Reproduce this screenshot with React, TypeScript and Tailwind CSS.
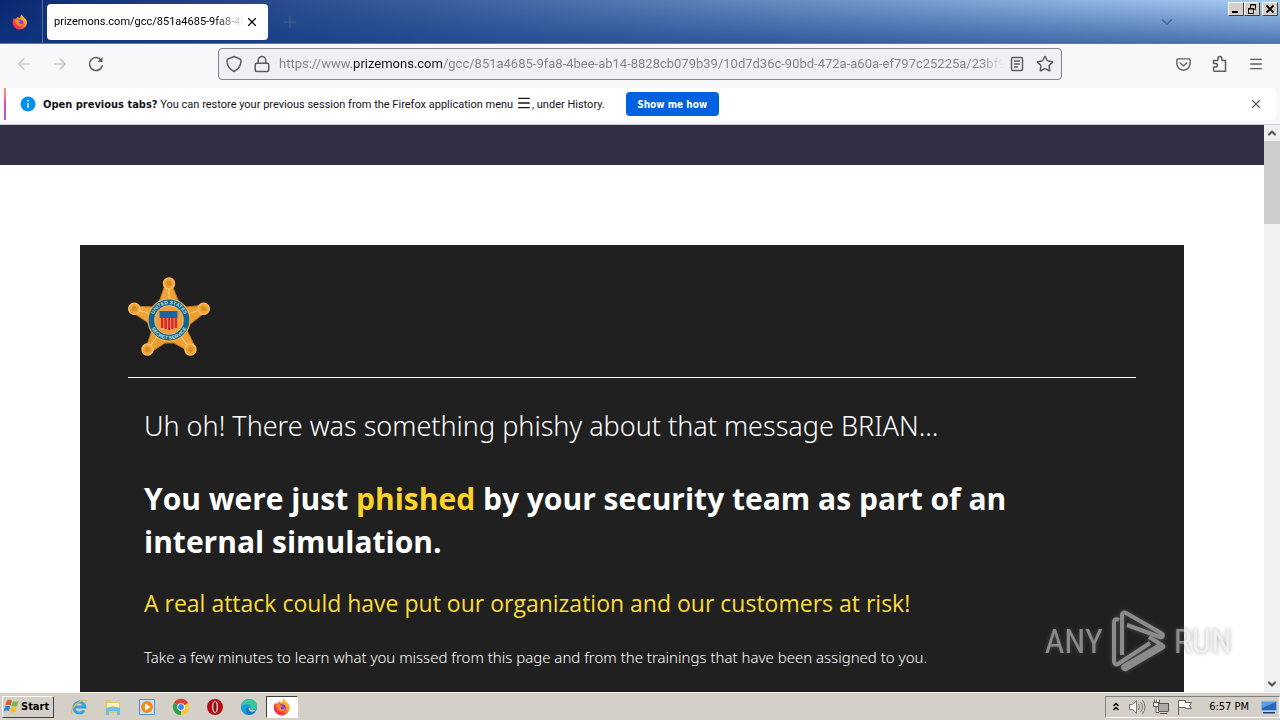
import type {ReactNode} from "react";
import {ArrowLeft, ArrowRight, ChevronDown, ChevronUp, Lock, Menu, Plus, Star, X} from "lucide-react";

function Firefox({className}: { className?: string }) {
    return (
        <svg viewBox="0 0 18 18" className={className} aria-hidden="true">
            <defs>
                <linearGradient id="fox" x1="1" y1="0" x2="0" y2="1">
                    <stop offset="0" stopColor="#fff04a"/>
                    <stop offset=".35" stopColor="#ffa028"/>
                    <stop offset=".7" stopColor="#ff3a45"/>
                    <stop offset="1" stopColor="#e2196b"/>
                </linearGradient>
            </defs>
            <path fill="url(#fox)" d="M2.2 4.500 3 6l2-1.200c.5-1 1.300-1.500 2-1.800 0 .6.300 1.200.8 1.500h1.400c.2-1.800.8-3.200 1.800-4.200.3 1.500 1.500 2.500 2.500 3.700C16 6 17.200 8 16.800 10.500 16 14.500 13 17.500 9 17.500S1 14.200.8 10c-.1-2 .4-4 1.400-5.500Z"/>
            <circle cx="9" cy="10" r="3.800" fill="#8b3fe0"/>
            <path fill="#ff8a22" d="M3.500 6.500c2-.8 3.200.3 4 .9l2.300.3c-.4 1-1.600 1.200-2.200 1.700-.2 1.600 1.500 2.400 3.200 1.600 1-.4 1.700.2 1.200.9-1.500 2.100-4.500 2.200-6.300.4C4 10.800 3.300 8.500 3.500 6.500Z"/>
        </svg>
    );
}

function Badge() {
    const spokes = [0, 72, 144, 216, 288];
    return (
        <svg viewBox="0 0 82 80" className="w-[82px] h-20" role="img" aria-label="United States Secret Service">
            <defs>
                <linearGradient id="gold" x1="0" y1="0" x2="1" y2="1">
                    <stop offset="0" stopColor="#f7b54a"/>
                    <stop offset=".5" stopColor="#e89a2c"/>
                    <stop offset="1" stopColor="#f4a63a"/>
                </linearGradient>
                <path id="ringTop" d="M25 43a16 16 0 0 1 32 0"/>
                <path id="ringBottom" d="M21.500 43a19.500 19.500 0 0 0 39 0"/>
            </defs>
            <path fill="url(#gold)" stroke="#c87514" strokeWidth="1" d="M37 8h7l8 20 6 2 20-2 1 6-18 14-2 5 8 17-5 5-16-9h-9L23 75l-5-4 6-18-2-6L4 35l1-6 20 1 5-2Z"/>
            {spokes.map((a) => (
                <g key={a} transform={`rotate(${a} 41 43)`}>
                    <path d="M41 10v14M41 24l-5 3M41 24l5 3" stroke="#ffd27a" strokeWidth="1" fill="none"/>
                    <circle cx="41" cy="6.500" r="5.500" fill="#eda235" stroke="#f9bd5c" strokeWidth="1.500"/>
                    <circle cx="41" cy="6.500" r="2.500" fill="#d98a21"/>
                </g>
            ))}
            <circle cx="41" cy="43" r="21" fill="#14648f" stroke="#f3b04a" strokeWidth="1.200"/>
            <circle cx="41" cy="43" r="14.500" fill="#efa03a" stroke="#d7dcc5" strokeWidth=".6"/>
            <g fill="#c6dfd2" fontFamily="Liberation Sans, sans-serif" fontSize="5" fontWeight="700" textAnchor="middle">
                <text><textPath href="#ringTop" startOffset="50%">UNITED STATES</textPath></text>
                <text><textPath href="#ringBottom" startOffset="50%">SECRET SERVICE</textPath></text>
            </g>
            <path fill="#f0b27a" d="M33 41h16v10l-8 2-8-1Z"/>
            <path fill="#1767a5" d="M31.500 34h18v7h-18Z"/>
            <path stroke="#d92a22" strokeWidth="2.600" d="M34.200 41v10M37.600 41v11M41 41v12M44.400 41v11M47.800 41v10"/>
        </svg>
    );
}

function TitleBar() {
    const caption = "w-4 h-[14px] flex items-center justify-center bg-[#d4d0c8] border border-t-white border-l-white border-r-[#404040] border-b-[#404040]";
    return (
        <header className="relative h-11 flex items-center bg-linear-to-r from-[#0b2871] to-[#a9cff5] border-b border-[#6b7690]">
            <div className="absolute inset-0 bg-linear-to-b from-transparent to-[#0e3a86]/60"/>
            <div className="relative w-[43px] h-full flex items-center justify-center border-r border-[#53689d] pr-0.5">
                <Firefox className="size-4"/>
            </div>
            <div className="relative ml-1 h-9 w-[221px] flex items-center rounded bg-white pl-[7px] pr-2">
                <span className="flex-1 overflow-hidden whitespace-nowrap pt-0.5 text-[11px] mask-r-from-85% font-['Roboto',sans-serif]">prizemons.com/gcc/851a4685-9fa8-4bee</span>
                <button aria-label="Close tab" className="shrink-0"><X className="size-4 p-px" strokeWidth={2}/></button>
            </div>
            <button aria-label="New tab" className="relative ml-3 text-[#566a7e]"><Plus className="size-5" strokeWidth={1}/></button>
            <button aria-label="List all tabs" className="relative ml-auto mr-[52px] text-[#45699c]"><ChevronDown className="size-[18px]"/></button>
            <div className="relative self-start flex mt-0.5 mr-0.5">
                <button aria-label="Minimize" className={caption}>
                    <svg viewBox="0 0 12 10" className="w-3 h-[10px]"><path d="M2 7h6v2H2z"/></svg>
                </button>
                <button aria-label="Restore" className={caption}>
                    <svg viewBox="0 0 12 10" className="w-3 h-[10px]" fill="none" stroke="#000"><path d="M4.500 4V.5h5v5H8M4 1h6M2.500 4.500h5v5h-5zM2 5h6"/></svg>
                </button>
                <button aria-label="Close" className={caption + " ml-0.5"}>
                    <svg viewBox="0 0 12 10" className="w-3 h-[10px]" stroke="#000" strokeWidth="1.800"><path d="m2.500 1.500 7 7m0-7-7 7"/></svg>
                </button>
            </div>
        </header>
    );
}

function Toolbar() {
    return (
        <nav className="h-11 flex items-center bg-[#f8f8fb] pb-1 text-[#5b5b66]">
            <div className="w-[218px] shrink-0 flex items-center gap-[18px] pl-[15px]">
                <button aria-label="Back" className="text-[#bdbdc4]"><ArrowLeft className="size-[18px]" strokeWidth={1.5}/></button>
                <button aria-label="Forward" className="text-[#bdbdc4]"><ArrowRight className="size-[18px]" strokeWidth={1.5}/></button>
                <button aria-label="Reload">
                    <svg viewBox="0 0 18 18" className="size-[18px]" fill="none" stroke="currentColor" strokeWidth="1.500">
                        <path d="M14.500 5.500A6.500 6.500 0 1 0 15.500 10"/>
                        <path d="M15.500 2v5h-5Z" fill="currentColor" stroke="none"/>
                    </svg>
                </button>
            </div>
            <div className="w-[844px] min-w-0 h-8 flex items-center rounded border border-[#85858f] bg-[#f0f0f4] px-[7px]">
                <svg viewBox="0 0 16 18" className="w-4 h-[18px] shrink-0" fill="none" stroke="currentColor" strokeWidth="1.500">
                    <path d="M8 1.500 14 4c1 .4 1 1 1 2-.2 5-2 8-7 10.500C3 14 1.200 11 1 6c0-1 0-1.600 1-2Z"/>
                </svg>
                <Lock className="size-[18px] ml-[11px] shrink-0" strokeWidth={2}/>
                <div className="relative flex-1 min-w-0 ml-2 overflow-hidden whitespace-nowrap text-[13px] text-[#85858d] mask-r-from-97% font-['Roboto',sans-serif]">
                    https://www.<span className="text-[#15141a]">prizemons.com</span>/gcc/851a4685-9fa8-4bee-ab14-8828cb079b39/10d7d36c-90bd-472a-a60a-ef797c25225a/23bf96
                </div>
                <button aria-label="Reader view" className="ml-1.5">
                    <svg viewBox="0 0 16 16" className="size-4" fill="none" stroke="currentColor" strokeWidth="1.500">
                        <rect x="2.500" y="1.500" width="11" height="13" rx="1.500"/>
                        <path d="M5 5h6M5 8h6M5 11h4"/>
                    </svg>
                </button>
                <button aria-label="Bookmark" className="ml-[11px]"><Star className="size-[18px]"/></button>
            </div>
            <div className="ml-auto flex items-center gap-[19px] pr-4">
                <button aria-label="Save to Pocket">
                    <svg viewBox="0 0 18 18" className="size-[17px]" fill="none" stroke="currentColor" strokeWidth="1.500" strokeLinecap="round">
                        <path d="M3.500 3h11c1 0 1.500.6 1.500 1.500V8c0 4-3 7-7 7S2 12 2 8V4.500C2 3.600 2.500 3 3.500 3Z"/>
                        <path d="m5.500 7.500 3.500 3 3.500-3"/>
                    </svg>
                </button>
                <button aria-label="Extensions">
                    <svg viewBox="0 0 18 18" className="size-[18px]" fill="none" stroke="currentColor" strokeWidth="1.500">
                        <path d="M2.500 5.500h3.800c.5 0 .7-.3.7-.7V3.300a1.900 1.900 0 0 1 3.800 0v1.500c0 .4.2.7.7.7h3v10.700h-11c-.6 0-1-.4-1-1v-2.400c0-.4.300-.7.700-.7h1.500a1.700 1.700 0 0 0 0-3.500H3.200c-.4 0-.7-.3-.7-.7Z"/>
                    </svg>
                </button>
                <button aria-label="Open application menu"><Menu className="size-4" strokeWidth={2}/></button>
            </div>
        </nav>
    );
}

function RestoreNotice() {
    return (
        <div className="h-[37px] bg-[#f8f8fb] border-b border-[#ceced8] pb-1">
            <div className="h-8 mr-1 ml-1 flex items-center rounded bg-white text-[11px] text-[#15141a]">
                <div className="w-0.5 h-full bg-linear-to-b from-[#ff9a6a] via-[#e04aa5] to-[#9059ff]"/>
                <svg viewBox="0 0 16 16" className="size-4 ml-3.5" aria-hidden="true">
                    <circle cx="8" cy="8" r="7.500" fill="#0090ed"/>
                    <path d="M8 4v1.500M8 7v5" stroke="#fff" strokeWidth="1.300"/>
                </svg>
                <p className="ml-[7px] flex items-center whitespace-pre pt-0.5">
                    <strong>Open previous tabs?</strong>
                    <span className="font-['Roboto',sans-serif]"> You can restore your previous session from the Firefox application menu </span>
                    <Menu className="size-4 mb-1" strokeWidth={2}/>
                    <span className="font-['Roboto',sans-serif]">, under History.</span>
                </p>
                <button className="ml-[21px] h-6 w-[93px] rounded bg-[#0061e0] font-bold text-[10px] text-white">Show me how</button>
                <button aria-label="Dismiss" className="ml-auto mr-[13px] text-[#5b5b66]"><X className="size-3.5" strokeWidth={2}/></button>
            </div>
        </div>
    );
}

function Watermark() {
    return (
        <div
            className="absolute right-12 bottom-5 flex items-center gap-2 text-[34px] leading-none text-[#e4e4e4] opacity-55 drop-shadow-[0_0_2px_#777] font-['Roboto_Condensed',Roboto,sans-serif]"
        >
            <span>ANY</span>
            <svg viewBox="0 0 55 62" className="w-[55px] h-[62px]" fill="none" stroke="currentColor" strokeWidth="4" strokeLinejoin="round" aria-hidden="true">
                <path d="M8 10c-4-2-5 0-5 3v38c0 3 2 4 4 3l32-21"/>
                <path d="M11 45V5c0-2 2-3 4-2l35 20c3 2 2 5-1 4L16 15"/>
                <path d="m38 27 13 8c2 1 2 2 0 3L15 59c-2 1-4-1-2-3l36-21"/>
            </svg>
            <span>RUN</span>
        </div>
    );
}

function PageContent() {
    return (
        <main className="relative flex-1 min-h-0 overflow-hidden flex bg-white">
            <div className="flex-1 min-w-0">
                <div className="h-10 bg-[#312f43]"/>
                <section className="mx-20 mt-20 h-full bg-[#202020] px-12 pt-8 text-white font-['Open_Sans','Noto_Sans',sans-serif]">
                    <div className="border-b border-white pb-5"><Badge/></div>
                    <div className="px-4">
                        <h2 className="mt-[30px] text-[27px] leading-9 font-light font-['Noto_Sans',sans-serif]">Uh oh! There was something phishy about that message BRIAN...</h2>
                        <h1 className="mt-[33px] text-[30px] leading-[43px] font-bold">
                            You were just <span className="text-[#fdd32b]">phished</span> by your security team as part of an internal simulation.
                        </h1>
                        <h3 className="mt-6 text-[23px] leading-8 text-[#fbdc3a]">A real attack could have put our organization and our customers at risk!</h3>
                        <p className="mt-[26px] text-[15px] leading-6 font-light font-['Noto_Sans',sans-serif]">Take a few minutes to learn what you missed from this page and from the trainings that have been assigned to you.</p>
                    </div>
                </section>
            </div>
            <div className="w-4 shrink-0 bg-[#f0f0f0] flex flex-col items-center text-[#505050]">
                <button aria-label="Scroll up" className="h-4"><ChevronUp className="size-3" strokeWidth={4}/></button>
                <div className="w-full h-[83px] bg-[#cdcdcd]"/>
                <button aria-label="Scroll down" className="mt-auto h-4"><ChevronDown className="size-3" strokeWidth={4}/></button>
            </div>
            <Watermark/>
        </main>
    );
}

function TaskButton({label, active, children}: { label: string; active?: boolean; children: ReactNode }) {
    return (
        <button
            aria-label={label}
            className={active
                ? "w-8 h-[22px] flex items-center justify-center bg-white border border-t-[#404040] border-l-[#404040] border-r-white border-b-white"
                : "w-[34px] h-[22px] flex items-center justify-center"}
        >
            {children}
        </button>
    );
}

function Taskbar() {
    return (
        <footer className="h-7 shrink-0 flex items-center bg-[#d4d0c8] border-t border-[#f7f5f0] text-[11px] text-black">
            <button className="ml-0.5 w-[52px] h-[22px] flex items-center gap-px border border-t-white border-l-white border-r-[#404040] border-b-[#404040] font-bold">
                <svg viewBox="0 0 18 18" className="size-[17px] shrink-0" aria-hidden="true">
                    <path fill="#e8592b" d="M4 3c2-1.500 4-1.200 5.500-.2L8 8C6.500 7 4.500 7 2.500 8Z"/>
                    <path fill="#79b83e" d="M10.500 3.200c2 1 4 1 6-.2L15 8.200c-2 1.200-4 1.200-6 .2Z"/>
                    <path fill="#2f83d0" d="M2.200 9c2-1.200 4-1 5.500 0l-1.500 5c-1.500-1-3.500-1-5.500.200Z"/>
                    <path fill="#f6bd2b" d="M8.700 9.500c2 1 4 1 6-.2l-1.500 5.200c-2 1.200-4 1.200-6 .2Z"/>
                </svg>
                <span className="pt-0.5">Start</span>
            </button>
            <div className="ml-2 flex items-center">
                <TaskButton label="Internet Explorer">
                    <svg viewBox="0 0 18 18" className="size-[18px]" fill="none">
                        <path d="M14 12.500a5.500 5.500 0 1 1 .8-3.500H5" stroke="#36a3e0" strokeWidth="3"/>
                        <path d="M2 16c-3-3 3-10 8-12.500C14 1.500 17 1.500 16 5" stroke="#e5bd47" strokeWidth="1.300"/>
                    </svg>
                </TaskButton>
                <TaskButton label="Explorer">
                    <svg viewBox="0 0 18 18" className="size-[18px]">
                        <path fill="#e6c769" d="M1.500 2h5l1 2h8v11h-14Z"/>
                        <path fill="#fbf0b5" d="M3 5h12v5H3Z"/>
                        <path fill="#73bce3" d="M2 10q7-3 14 0v7h-3v-4H5v4H2Z"/>
                    </svg>
                </TaskButton>
                <TaskButton label="Media Player">
                    <svg viewBox="0 0 18 18" className="size-[18px]">
                        <path fill="#c9e3f5" stroke="#4d94cc" d="M1.500 1.500h15v15h-15Z"/>
                        <circle cx="9" cy="9" r="6" fill="#f48a1d"/>
                        <path fill="#fff" d="m7 5.500 5.500 3.500L7 12.500Z"/>
                    </svg>
                </TaskButton>
                <TaskButton label="Chrome">
                    <svg viewBox="0 0 18 18" className="size-[18px]">
                        <circle cx="9" cy="9" r="8" fill="#f9c92e"/>
                        <path fill="#dd4437" d="M9 9 2 5a8 8 0 0 1 14 0Z"/>
                        <path fill="#2b9f54" d="M9 9v8A8 8 0 0 1 2 5Z"/>
                        <circle cx="9" cy="9" r="3.800" fill="#fff"/>
                        <circle cx="9" cy="9" r="2.900" fill="#4386f4"/>
                    </svg>
                </TaskButton>
                <TaskButton label="Opera">
                    <svg viewBox="0 0 18 18" className="size-[18px]">
                        <circle cx="9" cy="9" r="8" fill="#b50c17"/>
                        <ellipse cx="9" cy="9" rx="3" ry="6" fill="#e8dada"/>
                        <ellipse cx="9" cy="9" rx="1.600" ry="5" fill="#8b0f13"/>
                    </svg>
                </TaskButton>
                <TaskButton label="Edge">
                    <svg viewBox="0 0 18 18" className="size-[18px]">
                        <circle cx="9" cy="9" r="8" fill="#1476cb"/>
                        <path fill="#39c6a3" d="M1 9C1 4 5 1 9 1c5 0 8 3.500 8 7 0 2.500-2 4-4.500 4-2 0-2.700-1-1.700-2.200C12 7 6 5 1 9Z"/>
                        <path fill="#1a9edb" d="M1 9c4-4.500 10-2.500 9.800.8C9 8 6.500 9.500 6 12c-.4 2 1 4 2.500 5C4 17 1 13 1 9Z"/>
                        <path fill="#d4d0c8" d="M10.800 9.800c-1 1.200-.3 2.400 1.700 2.400 1.600 0 2.600-.4 3.500-1-1 3-5 3.300-7 1-1-1.400-.2-3.500 1.800-2.400Z"/>
                    </svg>
                </TaskButton>
                <TaskButton label="Firefox" active><Firefox className="size-[18px]"/></TaskButton>
            </div>
            <div className="ml-auto h-[22px] flex items-center border border-t-[#808080] border-l-[#808080] border-r-white border-b-white pl-1.5 pr-0.5">
                <svg viewBox="0 0 8 12" className="w-2 h-3" fill="none" stroke="#000" strokeWidth="1.400"><path d="m1.500 5 2.500-2.500L6.500 5M1.500 9 4 6.500 6.500 9"/></svg>
                <svg viewBox="0 0 18 18" className="size-[18px] ml-2" fill="#fafafa" stroke="#777">
                    <path d="M1.500 6.500h3l4-4v13l-4-4h-3Z"/>
                    <path d="M10.500 6q2 3 0 6M12.500 4q4 5 0 10M14.500 2q5 7 0 14" fill="none"/>
                </svg>
                <svg viewBox="0 0 18 18" className="size-[18px] ml-1.5" fill="#fafafa" stroke="#555">
                    <path fill="#aaa" d="M6.500 5.500h10v8h-10zM8 15.500h7"/>
                    <path d="M2.500 1.500v3h5v-3M4.500 1.500v3M1.500 4.500h5v4h-5ZM4 8.500v6h3"/>
                </svg>
                <svg viewBox="0 0 18 18" className="size-[18px] ml-1.5" fill="#fafafa" stroke="#666">
                    <path d="M2.500 17V2.500h7v2h6l-2 3 2 3h-6v-1h-7"/>
                </svg>
                <time className="ml-[15px] pt-0.5">6:57 PM</time>
                <svg viewBox="0 0 16 16" className="size-4 ml-3">
                    <path fill="#2868bc" stroke="#8db3dc" d="M.5 2.500h15v9H.5Z"/>
                    <path fill="#5b9be0" d="M1 3h14L1 9Z"/>
                    <path fill="#163d77" d="M2 13h12v1.500H2Z"/>
                </svg>
            </div>
        </footer>
    );
}

export default function App() {
    return (
        <div className="h-screen flex flex-col overflow-hidden bg-white font-['DejaVu_Sans_Condensed','DejaVu_Sans',sans-serif]">
            <div className="shrink-0">
                <TitleBar/>
                <Toolbar/>
                <RestoreNotice/>
            </div>
            <PageContent/>
            <Taskbar/>
        </div>
    );
}
